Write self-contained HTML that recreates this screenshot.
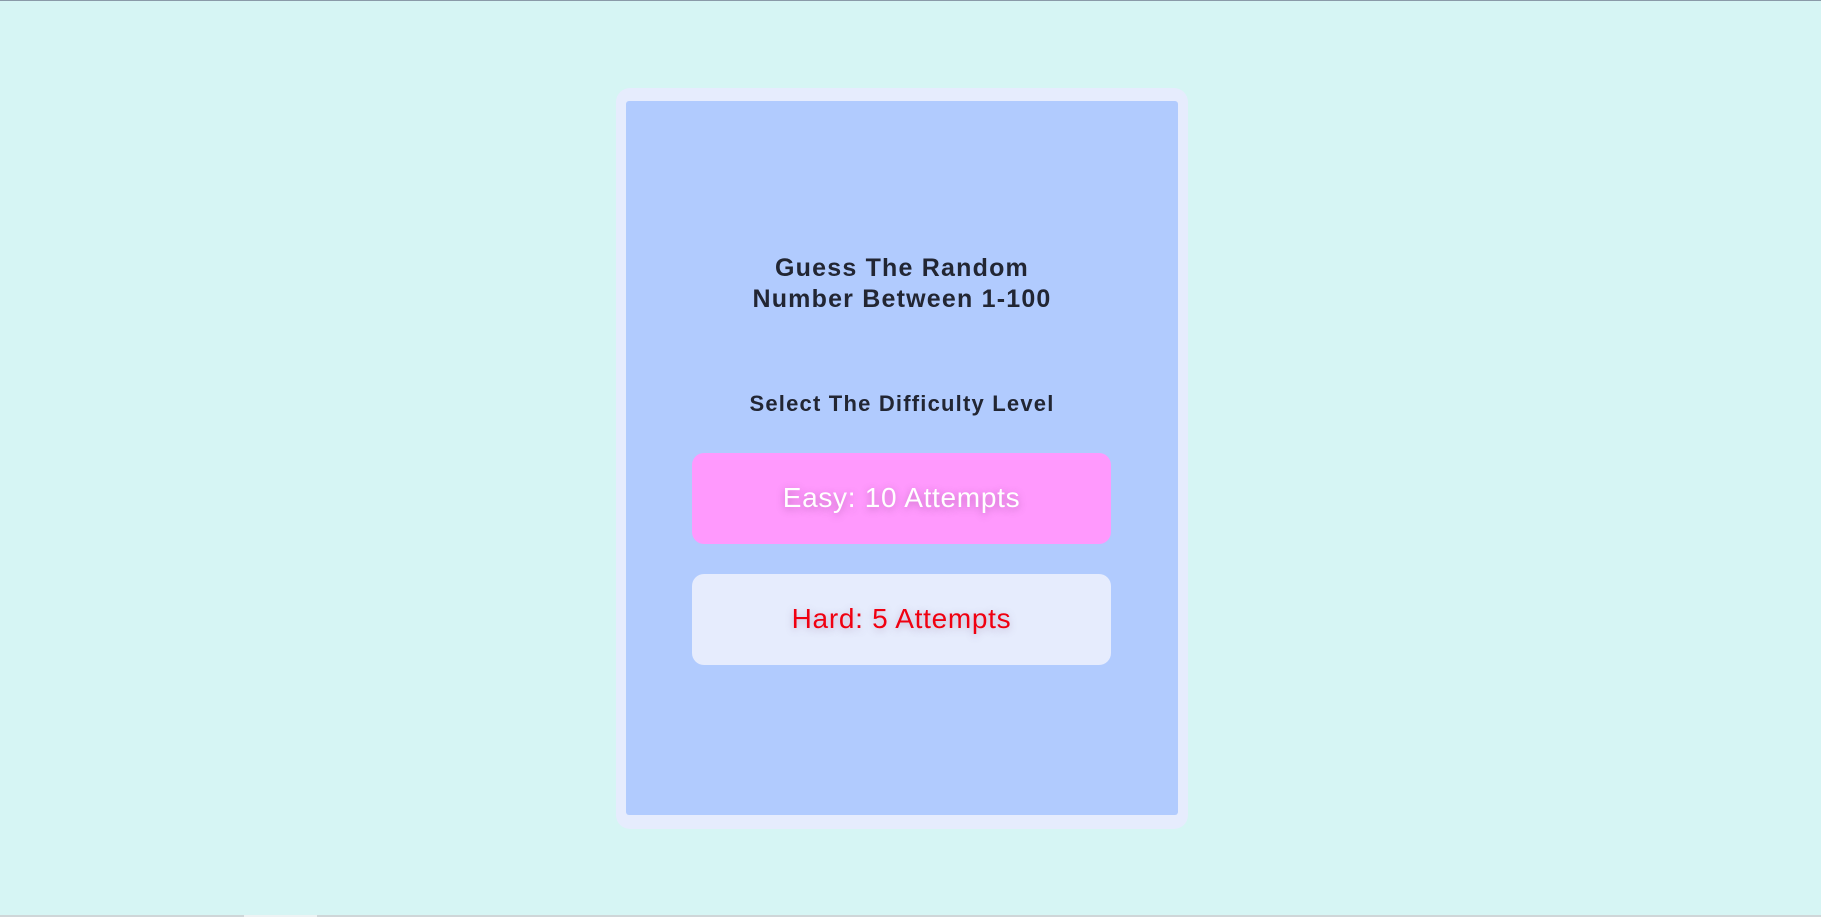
<!DOCTYPE html>
<html><head><style>
html,body{margin:0;padding:0;}
body{width:1821px;height:916px;background:#d6f5f4;position:relative;overflow:hidden;font-family:"Liberation Sans",sans-serif;border-top:1px solid #8a9aa8;box-sizing:border-box;}
.outer{position:absolute;left:616px;top:87px;width:572px;height:741px;background:#e6ecfd;border-radius:14px;}
.inner{position:absolute;left:626px;top:100px;width:552px;height:714px;background:#b1cbfe;border-radius:3px;}
.t{position:absolute;left:626px;width:552px;text-align:center;color:#222633;font-weight:bold;}
.btn{position:absolute;left:692px;width:419px;height:91px;border-radius:12px;text-align:center;line-height:89px;font-size:28px;letter-spacing:0.7px;}
.easy{top:452px;background:#ff99fd;color:#fff;text-shadow:0 2px 8px rgba(120,60,120,0.45);}
.hard{top:573px;background:#e6ecfd;color:#f00010;text-shadow:0 2px 8px rgba(120,80,120,0.35);}
.bar{position:absolute;left:0;top:914px;width:1821px;height:2px;background:#cfd6d8;}
</style></head><body>
<div class="outer"></div>
<div class="inner"></div>
<div class="t" style="top:252px;font-size:25px;line-height:31px;letter-spacing:1.2px;">Guess The Random<br>Number Between 1-100</div>
<div class="t" style="top:390px;font-size:22px;line-height:26px;letter-spacing:1.2px;">Select The Difficulty Level</div>
<div class="btn easy">Easy: 10 Attempts</div>
<div class="btn hard">Hard: 5 Attempts</div>
<div class="bar"></div>
<div style="position:absolute;left:244px;top:914px;width:73px;height:2px;background:#eef2f3"></div>
</body></html>
